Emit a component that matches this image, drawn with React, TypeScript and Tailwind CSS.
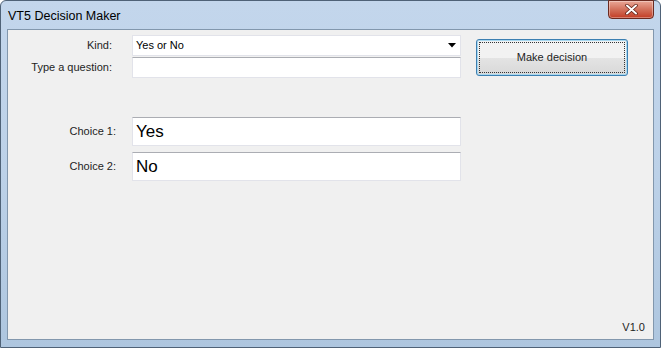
import React from "react";

const ui = "font-['Liberation_Sans',Arial,sans-serif]";

function TextBox({ value, big }: { value?: string; big?: boolean }) {
  return (
    <div
      className={`w-[329px] ${big ? "h-[29px] text-[17px]" : "h-[21px] text-[11px]"} flex items-center pl-[3px] bg-white border border-[#e2e3ea] border-t-[#abadb3] text-black`}>
      {value}
    </div>
  );
}

function Row({ label, children, labelW = "w-[104px]" }: { label: string; children: React.ReactNode; labelW?: string }) {
  return (
    <div className="flex items-center">
      <div className={`${labelW} text-right text-[11px] text-[#1e1e1e] shrink-0`}>{label}</div>
      <div className={labelW === "w-[104px]" ? "ml-[20px]" : "ml-[16px]"}>{children}</div>
    </div>
  );
}

export default function App() {
  return (
    <div
      className={`${ui} w-[661px] h-[348px] flex flex-col rounded-t-[6px] border border-[#4f6277] bg-gradient-to-b from-[#c3d6ec] via-[#bcd1e8] to-[#aec6df]`}>
      {/* title bar */}
      <div className="h-[28px] flex items-start relative">
        <span className="mt-[6px] ml-[7px] text-[12.5px] text-black">VT5 Decision Maker</span>
        <div className="ml-auto mr-[6px] w-[46px] h-[19px] -mt-px rounded-b-[4px] border border-[#6b2a20] bg-gradient-to-b from-[#e9a797] via-[#d2705b] to-[#c23a22] flex items-center justify-center shadow-[inset_0_0_0_1px_rgba(255,255,255,0.35)]">
          <svg width="13" height="11" viewBox="0 0 13 11">
            <path d="M2 1.5 L11 9.5 M11 1.5 L2 9.5" stroke="#5a1a10" strokeWidth="3.4" strokeLinecap="round" />
            <path d="M2 1.5 L11 9.5 M11 1.5 L2 9.5" stroke="#ffffff" strokeWidth="2" strokeLinecap="round" />
          </svg>
        </div>
      </div>
      {/* client area */}
      <div className="flex-1 mx-[6px] mb-[7px] border border-[#8297ad] bg-[#f0f0f0] flex flex-col relative">
        <div className="flex pt-[5px]">
          <div className="flex flex-col gap-[1px]">
            <Row label="Kind:">
              <div className="w-[329px] h-[21px] flex items-center pl-[3px] pr-[4px] bg-white border border-[#e2e3ea] text-[11px] text-black">
                <span>Yes or No</span>
                <svg className="ml-auto" width="8" height="5" viewBox="0 0 8 5">
                  <path d="M0 0 H8 L4 4.5 Z" fill="#000" />
                </svg>
              </div>
            </Row>
            <Row label="Type a question:">
              <TextBox />
            </Row>
          </div>
          <button className="ml-[15px] mt-[4px] w-[152px] h-[37px] rounded-[3px] border border-[#3c7fb1] bg-gradient-to-b from-[#f2f2f2] from-50% via-[#e4e4e4] via-50% to-[#d8d8d8] shadow-[inset_0_0_0_1px_#a8d8f0] p-[2px] text-[11px] text-[#1e1e1e]">
            <div className="w-full h-full border border-dotted border-[#333] flex items-center justify-center">
              Make decision
            </div>
          </button>
        </div>
        <div className="flex flex-col gap-[6px] mt-[39px]">
          <Row label="Choice 1:" labelW="w-[108px]">
            <TextBox value="Yes" big />
          </Row>
          <Row label="Choice 2:" labelW="w-[108px]">
            <TextBox value="No" big />
          </Row>
        </div>
        <div className="mt-auto self-end mr-[8px] mb-[4px] text-[11px] text-[#1e1e1e]">V1.0</div>
      </div>
    </div>
  );
}
